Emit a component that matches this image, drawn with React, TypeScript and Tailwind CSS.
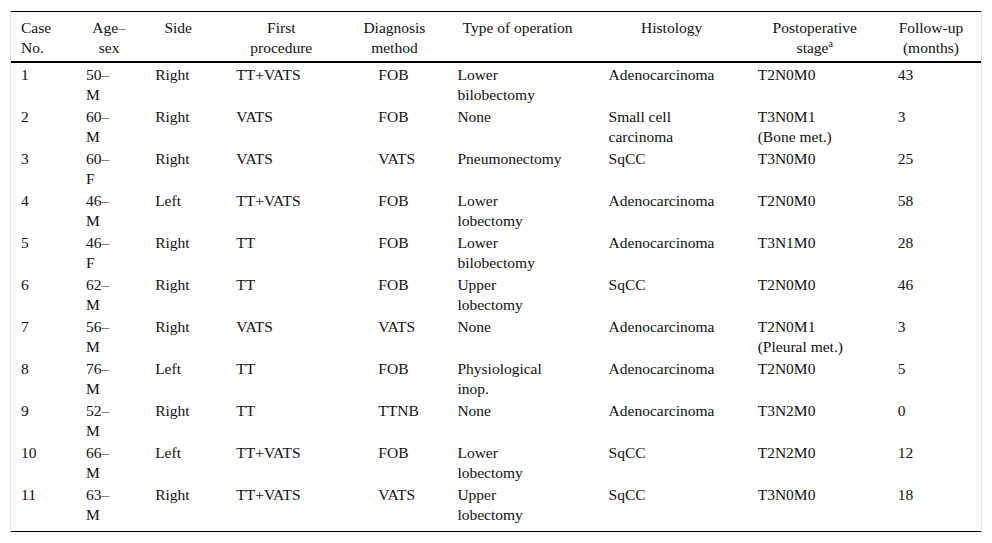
import React from "react";

type Row = string[];

const rows: Row[] = [
  ["1", "50–|M", "Right", "TT+VATS", "FOB", "Lower|bilobectomy", "Adenocarcinoma", "T2N0M0", "43"],
  ["2", "60–|M", "Right", "VATS", "FOB", "None", "Small cell|carcinoma", "T3N0M1|(Bone met.)", "3"],
  ["3", "60–|F", "Right", "VATS", "VATS", "Pneumonectomy", "SqCC", "T3N0M0", "25"],
  ["4", "46–|M", "Left", "TT+VATS", "FOB", "Lower|lobectomy", "Adenocarcinoma", "T2N0M0", "58"],
  ["5", "46–|F", "Right", "TT", "FOB", "Lower|bilobectomy", "Adenocarcinoma", "T3N1M0", "28"],
  ["6", "62–|M", "Right", "TT", "FOB", "Upper|lobectomy", "SqCC", "T2N0M0", "46"],
  ["7", "56–|M", "Right", "VATS", "VATS", "None", "Adenocarcinoma", "T2N0M1|(Pleural met.)", "3"],
  ["8", "76–|M", "Left", "TT", "FOB", "Physiological|inop.", "Adenocarcinoma", "T2N0M0", "5"],
  ["9", "52–|M", "Right", "TT", "TTNB", "None", "Adenocarcinoma", "T3N2M0", "0"],
  ["10", "66–|M", "Left", "TT+VATS", "FOB", "Lower|lobectomy", "SqCC", "T2N2M0", "12"],
  ["11", "63–|M", "Right", "TT+VATS", "VATS", "Upper|lobectomy", "SqCC", "T3N0M0", "18"],
];

function Lines({ text }: { text: string }) {
  const parts = text.split("|");
  return (
    <>
      {parts.map((p, i) => (
        <div key={i}>{p}</div>
      ))}
    </>
  );
}

const th = "pl-[10px] pt-[6px] pb-[3px] font-normal whitespace-nowrap";
const inner = "flex flex-col items-center";

export default function App() {
  return (
    <div
      className="bg-white pt-[11px] px-[10px] text-[15.5px] leading-[20px] text-[#111]"
      style={{ fontFamily: '"Liberation Serif", "Times New Roman", serif' }}
    >
      <div className="border-x border-[#e2e2e2]">
        <table className="w-full table-fixed border-t border-b border-black">
          <colgroup>
            <col className="w-[65px]" />
            <col className="w-[69px]" />
            <col className="w-[81px]" />
            <col className="w-[142px]" />
            <col className="w-[79px]" />
            <col className="w-[151px]" />
            <col className="w-[149px]" />
            <col className="w-[140px]" />
            <col className="w-[93px]" />
          </colgroup>
          <thead>
            <tr className="border-b-2 border-black align-top">
              <th className={th + " text-left"}>
                <div>Case</div>
                <div>No.</div>
              </th>
              <th className={th + " pr-[13px]"}>
                <div className={inner}>
                  <div>Age–</div>
                  <div>sex</div>
                </div>
              </th>
              <th className={th + " pr-[25px]"}>
                <div className={inner}>Side</div>
              </th>
              <th className={th + " pr-[42px]"}>
                <div className={inner}>
                  <div>First</div>
                  <div>procedure</div>
                </div>
              </th>
              <th className={th + " pr-[37px]"}>
                <div className={inner}>
                  <div>Diagnosis</div>
                  <div>method</div>
                </div>
              </th>
              <th className={th + " pr-[21px]"}>
                <div className={inner}>Type of operation</div>
              </th>
              <th className={th + " pr-[13px]"}>
                <div className={inner}>Histology</div>
              </th>
              <th className={th + " pr-[16px]"}>
                <div className={inner}>
                  <div>Postoperative</div>
                  <div>
                    stage
                    <span className="relative top-[-6px] text-[10px] leading-none">a</span>
                  </div>
                </div>
              </th>
              <th className={th + " pr-[17px]"}>
                <div className={inner}>
                  <div>Follow-up</div>
                  <div>(months)</div>
                </div>
              </th>
            </tr>
          </thead>
          <tbody>
            {rows.map((r, ri) => (
              <tr key={ri} className="align-top">
                {r.map((c, ci) => (
                  <td
                    key={ci}
                    className={
                      ri === rows.length - 1
                        ? "pl-[10px] pt-[2px] pb-[6px] whitespace-nowrap"
                        : "pl-[10px] pt-[2px] whitespace-nowrap"
                    }
                  >
                    <div className="min-h-[40px]">
                      <Lines text={c} />
                    </div>
                  </td>
                ))}
              </tr>
            ))}
          </tbody>
        </table>
      </div>
    </div>
  );
}
